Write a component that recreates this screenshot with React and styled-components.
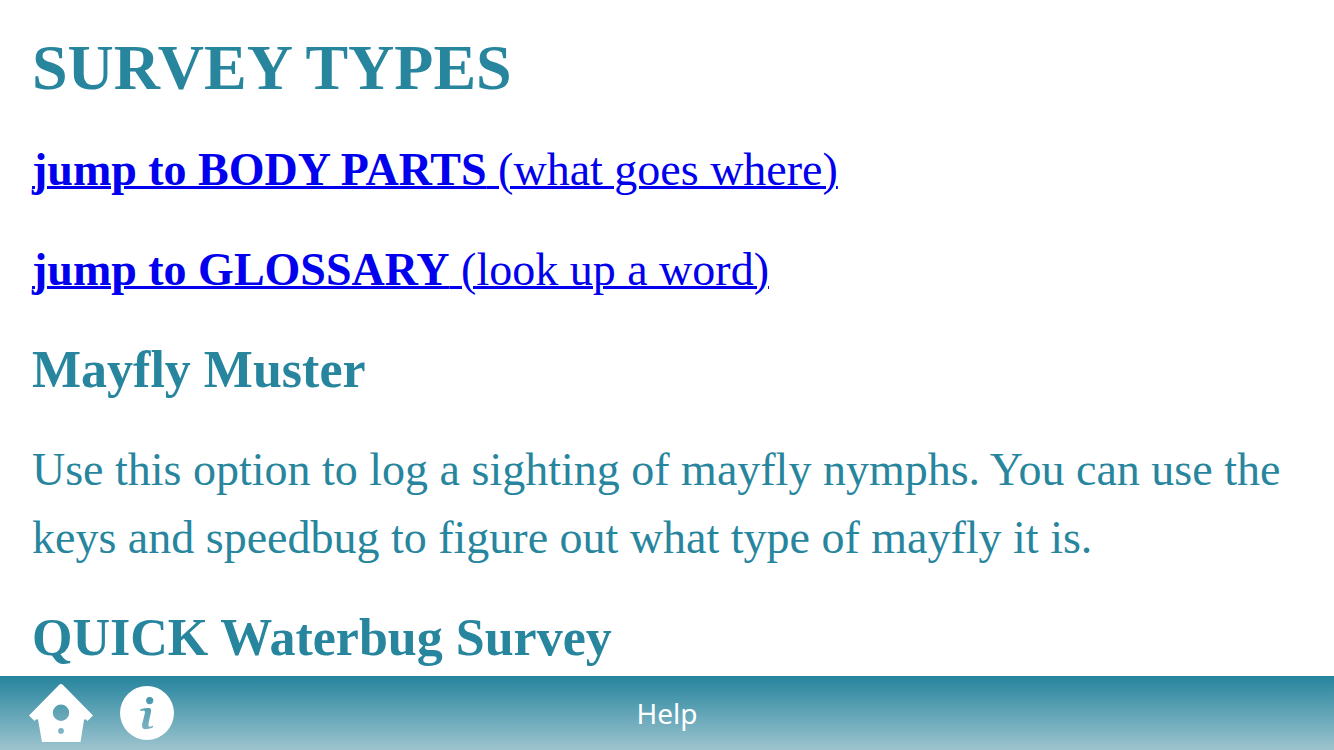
import React from "react";
import styled, { createGlobalStyle } from "styled-components";

const GlobalStyle = createGlobalStyle`
  *, *::before, *::after { box-sizing: border-box; }
  body { margin: 0; background: #fff; }
`;

const Screen = styled.div`
  display: flex;
  flex-direction: column;
  height: 100vh;
`;

const Article = styled.main`
  flex: 1;
  min-height: 0;
  overflow: hidden;
  display: flex;
  flex-direction: column;
  gap: 32px;
  padding: 32px;
  color: #27869e;
  font-family: "Liberation Serif", serif;
  font-size: 46px;
  line-height: 68px;
`;

const Title = styled.h1`
  margin: 0;
  font-size: 64px;
  line-height: 72px;
`;

const SectionTitle = styled.h2`
  margin: 0;
  font-size: 52px;
  line-height: 68px;
`;

const Paragraph = styled.p`
  margin: 0;
`;

const JumpLink = styled.a`
  color: #0000ee;
  text-decoration-thickness: 3px;
  text-underline-offset: 1px;
`;

const Footer = styled.footer`
  flex: none;
  display: grid;
  grid-template-columns: 1fr auto 1fr;
  align-items: center;
  height: 74px;
  padding: 0 28px;
  background: linear-gradient(#25849d, #9dc4cf);
`;

const Actions = styled.nav`
  display: flex;
  align-items: center;
  gap: 26px;
`;

const IconButton = styled.button`
  display: block;
  padding: 0;
  border: 0;
  background: none;
  cursor: pointer;

  svg { display: block; fill: #fff; }
`;

const FooterTitle = styled.span`
  color: #fff;
  font: 28px/40px "Noto Sans", sans-serif;
`;

const BirdhouseIcon = () => (
  <svg width="66" height="60" viewBox="0 0 66 60" aria-hidden="true">
    <path
      fillRule="evenodd"
      d="M31 2Q33 0 35 2L65 32.500L59.500 38Q57.500 35 56 37L52.500 59H14L10 36.500Q8 35.500 6.500 38L1 32.500ZM33 21.500A8.200 8.200 0 1 0 33 37.900A8.200 8.200 0 1 0 33 21.500ZM33 45A2.900 2.900 0 1 0 33 50.800A2.900 2.900 0 1 0 33 45Z"
    />
  </svg>
);

const InfoIcon = () => (
  <svg width="54" height="54" viewBox="0 0 54 54" aria-hidden="true">
    <path
      fillRule="evenodd"
      d="M27 0A27 27 0 1 1 27 54A27 27 0 1 1 27 0ZM29.700 11A3.600 3.600 0 1 0 29.700 18.200A3.600 3.600 0 1 0 29.700 11ZM20.300 23.300C23 22.300 26.500 22 29 22Q31.700 22.300 31 26L28.600 37Q28 40.700 29.500 40.700Q30.500 40.700 33 39.800V41.300C30 42.800 27.500 43.200 25 43.200Q21.300 42.700 22.200 38L24.800 27.500Q25.500 24.500 23.500 24.500L20.300 25Z"
    />
  </svg>
);

export default function App() {
  return (
    <Screen>
      <GlobalStyle />
      <Article>
        <Title>SURVEY TYPES</Title>
        <Paragraph>
          <JumpLink href="#body-parts"><b>jump to BODY PARTS</b> (what goes where)</JumpLink>
        </Paragraph>
        <Paragraph>
          <JumpLink href="#glossary"><b>jump to GLOSSARY</b> (look up a word)</JumpLink>
        </Paragraph>
        <SectionTitle>Mayfly Muster</SectionTitle>
        <Paragraph>
          Use this option to log a sighting of mayfly nymphs. You can use the keys
          and speedbug to figure out what type of mayfly it is.
        </Paragraph>
        <SectionTitle>QUICK Waterbug Survey</SectionTitle>
      </Article>
      <Footer>
        <Actions>
          <IconButton type="button" aria-label="Home"><BirdhouseIcon /></IconButton>
          <IconButton type="button" aria-label="Information"><InfoIcon /></IconButton>
        </Actions>
        <FooterTitle>Help</FooterTitle>
      </Footer>
    </Screen>
  );
}
